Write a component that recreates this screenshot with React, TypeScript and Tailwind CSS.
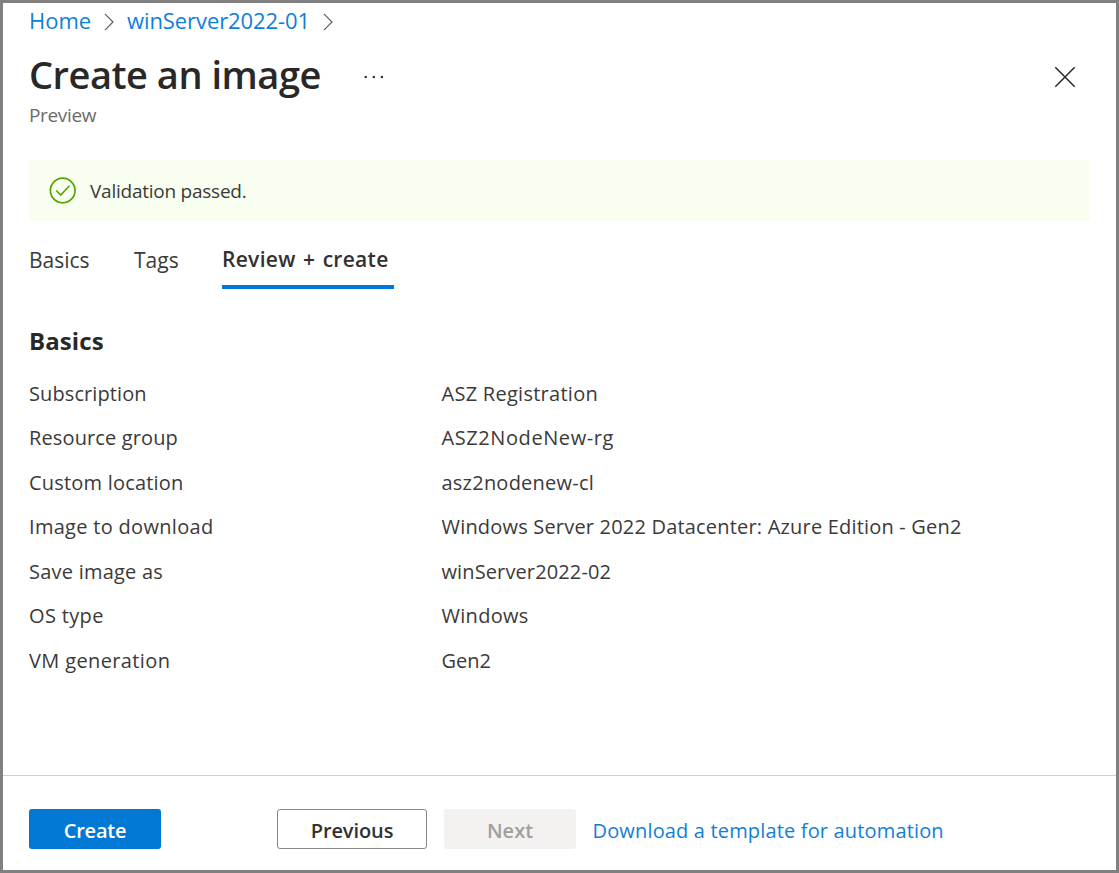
import React from "react";

const details = [
  { label: "Subscription", value: "ASZ Registration", ls: "tracking-[0.1px]", vs: "tracking-[0.27px]" },
  { label: "Resource group", value: "ASZ2NodeNew-rg", ls: "tracking-[0.13px]", vs: "tracking-[0.58px]" },
  { label: "Custom location", value: "asz2nodenew-cl", ls: "tracking-[0.2px]", vs: "tracking-[0.23px]" },
  {
    label: "Image to download",
    value: "Windows Server 2022 Datacenter: Azure Edition - Gen2",
    ls: "tracking-[0.3px]",
    vs: "tracking-[0.19px]",
  },
  { label: "Save image as", value: "winServer2022-02", ls: "tracking-[0.23px]", vs: "tracking-[0.12px]" },
  { label: "OS type", value: "Windows", ls: "tracking-[0.35px]", vs: "tracking-[0.3px]" },
  { label: "VM generation", value: "Gen2", ls: "tracking-[0.37px]", vs: "tracking-[0px]" },
];

function Chevron({ className }: { className: string }) {
  return (
    <svg className={className} width="10" height="18" viewBox="0 0 10 18" fill="none" stroke="#605e5c" strokeWidth="1.2">
      <path d="M0.9 0.9 L9 9 L0.9 17.1" />
    </svg>
  );
}

export default function App() {
  return (
    <div className="flex h-[873px] w-[1119px] flex-col border-[3px] border-[#808080] bg-white font-['Open_Sans',sans-serif] text-[20px] whitespace-nowrap text-[#3b3a39]">
      <nav className="flex h-[37px] items-center pl-[26px] text-[22px] text-[#0f80d7]">
        <a className="w-[75px] pb-[2px] tracking-[0px]">Home</a>
        <Chevron className="mr-[13px]" />
        <a className="w-[196px] pb-[2px] tracking-[-0.08px]">winServer2022-01</a>
        <Chevron className="" />
      </nav>

      <header className="flex h-[61px] items-center pl-[26px] pr-[40px] pt-[13px]">
        <h1 className="-mt-[6px] w-[335px] text-[38px] leading-[50px] font-semibold tracking-[-0.48px] text-[#292827]">Create an image</h1>
        <svg className="-mt-[1px]" width="20" height="4" viewBox="0 0 20 4" fill="#323130">
          <rect x="0.6" y="0.9" width="2.2" height="2.2" />
          <rect x="8.7" y="0.9" width="2.2" height="2.2" />
          <rect x="16.8" y="0.9" width="2.2" height="2.2" />
        </svg>
        <svg className="ml-auto" width="22" height="22" viewBox="0 0 22 22" fill="none" stroke="#292827" strokeWidth="1.5">
          <path d="M1.3 1.3 L20.7 20.7 M20.7 1.3 L1.3 20.7" />
        </svg>
      </header>
      <div className="h-[59px] pl-[26px] text-[19px] leading-[28px] tracking-[-0.35px] text-[#6d6b69]">Preview</div>

      <div className="ml-[26px] mr-[26px] flex h-[61px] items-center bg-[#f8fff0] pl-[20px]">
        <svg className="mr-[14px] mb-[1px]" width="27" height="27" viewBox="0 0 27 27" fill="none" stroke="#57a300">
          <circle cx="13.7" cy="13.5" r="12.3" strokeWidth="1.7" />
          <path d="M7.2 13.5 L11.7 18 L20.5 8.8" strokeWidth="1.6" />
        </svg>
        <span className="pt-[2px] text-[19px] tracking-[-0.24px]">Validation passed.</span>
      </div>

      <div className="flex h-[70px] pl-[26px] pt-[20px] text-[21px]">
        <div className="w-[105px] pt-[3px] leading-[32px] tracking-[0px]">Basics</div>
        <div className="w-[88px] pt-[3px] leading-[32px] tracking-[0px]">Tags</div>
        <div className="h-[48px] w-[172px] border-b-4 border-[#0078d4] pt-[2px] leading-[32px] font-semibold tracking-[0.3px] [word-spacing:1.6px] text-[#323130]">
          Review + create
        </div>
      </div>

      <section className="flex-1 pl-[26px] pt-[32px]">
        <h2 className="text-[24px] leading-[36px] font-bold tracking-[0.1px] text-[#292827]">Basics</h2>
        <dl className="pt-[12.5px]">
          {details.map((d) => (
            <div key={d.label} className="flex h-[44.5px] items-center">
              <dt className={"w-[412.5px] " + d.ls}>{d.label}</dt>
              <dd className={d.vs}>{d.value}</dd>
            </div>
          ))}
        </dl>
      </section>

      <footer className="flex h-[95px] items-start border-t border-[#cfcfcf] pl-[26px] pt-[33px]">
        <button className="mr-[116px] h-[40px] w-[132px] rounded-[3px] bg-[#0078d4] pt-[3px] font-semibold tracking-[-0.2px] text-white">Create</button>
        <button className="mr-[17px] h-[40px] w-[150px] rounded-[3px] border border-[#8a8886] pt-[3px] font-semibold tracking-[-0.1px] text-[#323130]">Previous</button>
        <button className="mr-[17px] h-[40px] w-[132px] rounded-[3px] bg-[#f3f2f1] pt-[3px] font-semibold tracking-[0px] text-[#a19f9d]">Next</button>
        <a className="-ml-[0.5px] pt-[2px] leading-[40px] tracking-[0.16px] text-[#0f80d7]">Download a template for automation</a>
      </footer>
    </div>
  );
}
